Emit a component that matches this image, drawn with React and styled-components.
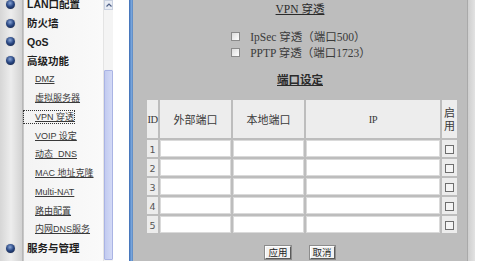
import React from 'react'
import styled, { createGlobalStyle } from 'styled-components'

const Global = createGlobalStyle`
  html, body {
    margin: 0;
    padding: 0;
    width: 500px;
    height: 261px;
    overflow: hidden;
    background: #ffffff;
  }
`

const Page = styled.div`
  display: flex;
  width: 500px;
  height: 261px;
  overflow: hidden;
`

const Menu = styled.div`
  width: 103px;
  flex-shrink: 0;
  overflow: hidden;
  background: linear-gradient(to right, #d6d6d6 0, #ededed 11px, #d2d2d2 22px, #9c9c9c 23px, #f3f3f3 24px, #fafafa 100%);
`

const MenuList = styled.ul`
  list-style: none;
  margin: -5px 0 0 0;
  padding: 0;
`

const Item = styled.li`
  display: flex;
  align-items: center;
  height: 18.75px;
  font-family: "Liberation Sans", "Noto Sans CJK SC", sans-serif;
  font-size: ${p => (p.$main ? '10.5px' : '9px')};
  font-weight: ${p => (p.$main ? 700 : 400)};
  color: ${p => (p.$main ? '#1e1e1e' : '#3a3a3a')};
  white-space: pre;
`

const BulletSlot = styled.span`
  width: 24px;
  flex-shrink: 0;
  display: flex;
  justify-content: center;
  padding-right: 3px;
  box-sizing: border-box;
`

const Bullet = styled.span`
  width: 9px;
  height: 9px;
  border-radius: 50%;
  background: radial-gradient(circle at 45% 35%, #8aa6d6 0, #2c4a86 45%, #142750 80%);
  box-shadow: 0 0 1px rgba(0, 0, 0, 0.4);
`

const Label = styled.span`
  padding-left: ${p => (p.$main ? '3px' : '11px')};
  text-decoration: ${p => (p.$main ? 'none' : 'underline')};
  outline: ${p => (p.$focus ? '1px dotted #333' : 'none')};
  line-height: 12px;
`

const Scrollbar = styled.div`
  width: 10px;
  flex-shrink: 0;
  display: flex;
  flex-direction: column;
  background: #f4f4f4;
  border-left: 1px solid #e4e4e4;
  box-sizing: border-box;
`

const ScrollButton = styled.div`
  height: 10px;
  display: flex;
  align-items: center;
  justify-content: center;
  background: #e8ecf4;
  border: 1px solid #c8d0e0;
  box-sizing: border-box;
`

const Thumb = styled.div`
  margin-top: 60px;
  height: 188px;
  background: linear-gradient(to right, #c2cbf0, #d4daf6);
  border: 1px solid #aab4e4;
  border-radius: 1px;
`

const Gap = styled.div`
  width: 16px;
  flex-shrink: 0;
  background: #ffffff;
`

const BlueLine = styled.div`
  width: 4px;
  flex-shrink: 0;
  background: linear-gradient(to right, #3c6cb4, #78a6dc 60%, #5a86c0);
`

const Main = styled.div`
  width: 334px;
  flex-shrink: 0;
  background: #bdbdbd;
  display: flex;
  flex-direction: column;
  align-items: center;
  font-family: "Liberation Serif", "Noto Sans CJK SC", serif;
  color: #2a2a2a;
`

const EdgeStrip = styled.div`
  width: 8px;
  flex-shrink: 0;
  background: linear-gradient(to right, #cfcfcf, #e2e2e2);
  border-left: 1px solid #a9a9a9;
  box-sizing: border-box;
`

const Title = styled.div`
  font-size: 11.5px;
  line-height: 14px;
  height: 14px;
  margin-top: ${p => p.$top}px;
  text-decoration: underline;
  font-weight: ${p => (p.$bold ? 700 : 400)};
  white-space: nowrap;
`

const Options = styled.div`
  margin-top: 12px;
  display: flex;
  flex-direction: column;
  padding-left: 2px;
`

const OptionRow = styled.label`
  display: flex;
  align-items: center;
  height: 16px;
  font-size: 11.5px;
  white-space: nowrap;
  color: #3a3a3a;
`

const Box = styled.input.attrs({ type: 'checkbox' })`
  appearance: none;
  margin: 0 10px 0 0;
  width: 9px;
  height: 9px;
  border: 1px solid #8a8a8a;
  background: linear-gradient(135deg, #dcdcdc, #ffffff);
  box-sizing: border-box;
`

const Table = styled.table`
  align-self: flex-start;
  margin: 11px 0 0 12px;
  border-collapse: separate;
  border-spacing: 2px;
  table-layout: fixed;
  width: 314px;
  font-size: 11px;
`

const Head = styled.th`
  height: 38px;
  padding: 0;
  background: #ededed;
  font-weight: 400;
  color: #3a3a3a;
  text-align: center;
  line-height: 13px;
  font-family: ${p => (p.$latin ? '"Liberation Serif", serif' : '"Noto Sans CJK SC", sans-serif')};
  font-size: ${p => (p.$latin ? '10.5px' : '11px')};
  letter-spacing: ${p => (p.$latin ? '-0.5px' : '0')};
`

const Cell = styled.td`
  height: 17px;
  padding: 0;
  background: #ececec;
  text-align: center;
  vertical-align: middle;
`

const Num = styled.span`
  font-family: "DejaVu Sans", sans-serif;
  font-size: 9.5px;
  color: #555;
`

const Field = styled.input`
  display: block;
  width: 100%;
  height: 17px;
  margin: 0;
  border: 1px solid #dadada;
  background: #ffffff;
  box-sizing: border-box;
`

const Tick = styled.span`
  display: inline-block;
  width: 9px;
  height: 9px;
  border: 1px solid #6e6e6e;
  background: #f4f4f4;
  box-sizing: border-box;
  vertical-align: middle;
`

const Buttons = styled.div`
  margin-top: 11px;
  display: flex;
  gap: 19px;
`

const Button = styled.button`
  height: 13px;
  padding: 0 2px;
  margin: 0;
  font-family: "Noto Sans CJK SC", sans-serif;
  font-size: 9.5px;
  line-height: 11px;
  color: #222;
  background: #f2f2f2;
  border: 1px solid;
  border-color: #ffffff #5a5a5a #5a5a5a #ffffff;
  box-shadow: 0 0 0 1px #8c8c8c;
`

const menu = [
  { label: 'LAN口配置', main: true },
  { label: '防火墙', main: true },
  { label: 'QoS', main: true },
  { label: '高级功能', main: true },
  { label: 'DMZ' },
  { label: '虚拟服务器' },
  { label: 'VPN 穿透', focus: true },
  { label: 'VOIP 设定' },
  { label: '动态  DNS' },
  { label: 'MAC 地址克隆' },
  { label: 'Multi-NAT' },
  { label: '路由配置' },
  { label: '内网DNS服务' },
  { label: '服务与管理', main: true },
]

const rows = [1, 2, 3, 4, 5]

export default function App() {
  return (
    <>
      <Global />
      <Page>
        <Menu>
          <MenuList>
            {menu.map(m => (
              <Item key={m.label} $main={m.main}>
                <BulletSlot>{m.main ? <Bullet /> : null}</BulletSlot>
                <Label $main={m.main} $focus={m.focus}>{m.label}</Label>
              </Item>
            ))}
          </MenuList>
        </Menu>
        <Scrollbar>
          <ScrollButton>
            <svg width="6" height="4" viewBox="0 0 6 4">
              <path d="M0.5 3.5 L3 1 L5.5 3.5" fill="none" stroke="#4d5f86" strokeWidth="1.2" />
            </svg>
          </ScrollButton>
          <Thumb />
        </Scrollbar>
        <Gap />
        <BlueLine />
        <Main>
          <Title $top={2}>VPN 穿透</Title>
          <Options>
            <OptionRow><Box />IpSec 穿透（端口500）</OptionRow>
            <OptionRow><Box />PPTP 穿透（端口1723）</OptionRow>
          </Options>
          <Title $top={13} $bold>端口设定</Title>
          <Table>
            <colgroup>
              <col style={{ width: 11 }} />
              <col style={{ width: 71 }} />
              <col style={{ width: 71 }} />
              <col style={{ width: 134 }} />
              <col style={{ width: 15 }} />
            </colgroup>
            <thead>
              <tr>
                <Head $latin>ID</Head>
                <Head>外部端口</Head>
                <Head>本地端口</Head>
                <Head $latin>IP</Head>
                <Head>启用</Head>
              </tr>
            </thead>
            <tbody>
              {rows.map(n => (
                <tr key={n}>
                  <Cell><Num>{n}</Num></Cell>
                  <Cell><Field readOnly /></Cell>
                  <Cell><Field readOnly /></Cell>
                  <Cell><Field readOnly /></Cell>
                  <Cell><Tick /></Cell>
                </tr>
              ))}
            </tbody>
          </Table>
          <Buttons>
            <Button>应用</Button>
            <Button>取消</Button>
          </Buttons>
        </Main>
        <EdgeStrip />
      </Page>
    </>
  )
}
